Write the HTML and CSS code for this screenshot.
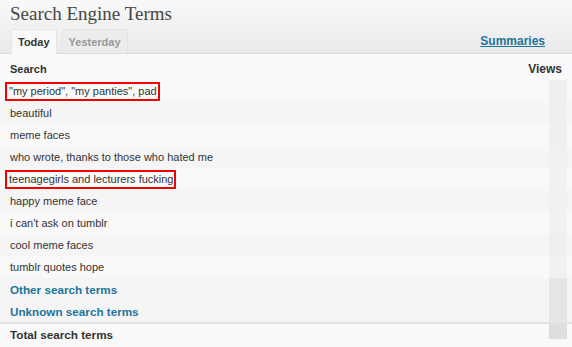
FILE: index.html
```html
<!DOCTYPE html>
<html lang="en">
<head>
<meta charset="UTF-8">
<title>Search Engine Terms</title>
<link rel="stylesheet" href="styles.css">
</head>
<body>
<div class="box">
  <div class="head">
    <h3>Search Engine Terms</h3>
    <div class="tabbar">
      <ul class="tabs">
        <li class="tab active">Today</li>
        <li class="tab">Yesterday</li>
      </ul>
      <a class="summaries" href="#">Summaries</a>
    </div>
  </div>

  <table class="stats">
    <thead>
      <tr><th class="label">Search</th><th class="views">Views</th></tr>
    </thead>
    <tbody>
      <tr><td class="label"><span class="mark">"my period", "my panties", pad</span></td><td class="views"><div class="bar b1"></div></td></tr>
      <tr class="alt"><td class="label">beautiful</td><td class="views"><div class="bar b1"></div></td></tr>
      <tr><td class="label">meme faces</td><td class="views"><div class="bar b1"></div></td></tr>
      <tr class="alt"><td class="label">who wrote, thanks to those who hated me</td><td class="views"><div class="bar b2"></div></td></tr>
      <tr><td class="label"><span class="mark">teenagegirls and lecturers fucking</span></td><td class="views"><div class="bar b2"></div></td></tr>
      <tr class="alt"><td class="label">happy meme face</td><td class="views"><div class="bar b2"></div></td></tr>
      <tr><td class="label">i can't ask on tumblr</td><td class="views"><div class="bar b2"></div></td></tr>
      <tr class="alt"><td class="label">cool meme faces</td><td class="views"><div class="bar b1"></div></td></tr>
      <tr><td class="label">tumblr quotes hope</td><td class="views"><div class="bar b2"></div></td></tr>
      <tr class="alt"><td class="label link">Other search terms</td><td class="views"><div class="bar b3"></div></td></tr>
      <tr class="alt"><td class="label link">Unknown search terms</td><td class="views"><div class="bar b3"></div></td></tr>
      <tr class="total"><td class="label">Total search terms</td><td class="views"><div class="bar b4"></div></td></tr>
    </tbody>
  </table>
</div>
</body>
</html>
```

FILE: styles.css
```css
body {
  margin: 0;
  background: #f9f9f9;
  font-family: "Liberation Sans", Arial, sans-serif;
  font-size: 11px;
  color: #333;
}

.box { width: 572px; height: 347px; overflow: hidden; }

.head {
  background: linear-gradient(to bottom, #f9f9f9, #e9e9e9);
  border-bottom: 1px solid #dcdcdc;
  height: 53px;
}

h3 {
  margin: 0;
  padding: 3px 0 0 10px;
  height: 26px;
  font-family: "Liberation Serif", Georgia, serif;
  font-weight: normal;
  font-size: 19px;
  line-height: 22px;
  color: #464646;
}

.tabbar {
  display: flex;
  align-items: flex-end;
  justify-content: space-between;
  height: 24px;
}

.tabs {
  list-style: none;
  margin: 0;
  padding: 0 0 0 11px;
  display: flex;
  gap: 5px;
}

.tab {
  height: 23px;
  line-height: 25px;
  padding: 0 6px;
  border-radius: 3px 3px 0 0;
  background: #ececec;
  color: #999;
  font-weight: bold;
  font-size: 11px;
  border: 1px solid #e4e4e4;
  border-bottom: none;
}

.tab.active {
  background: #f9f9f9;
  color: #333;
  height: 24px;
  margin-bottom: -1px;
  border-color: #e6e6e6;
}

.summaries {
  color: #21759b;
  font-weight: bold;
  font-size: 12px;
  margin: 0 27px 5px 0;
  text-decoration: underline;
}

.stats {
  width: 100%;
  border-collapse: collapse;
  margin-top: 4px;
}

.stats th {
  height: 20px;
  font-weight: bold;
  color: #333;
  vertical-align: middle;
}

.stats th.label { text-align: left; padding-left: 10px; font-size: 11px; }
.stats th.views { text-align: right; padding: 0 10px 0 0; font-size: 12px; }

.stats td { height: 22px; padding: 0; vertical-align: middle; }
.stats td.label { padding-left: 10px; }
.stats td.views { width: 40px; }

.stats tr.alt { background: #f5f5f5; }

.stats td.link { color: #21759b; font-weight: bold; font-size: 11.7px; }

.stats tr.total td { border-top: 2px solid #e2e2e2; height: 21px; }
.stats tr.total td.label { font-weight: bold; font-size: 11.7px; }

.bar { width: 18px; height: 22px; margin: 0 5px 0 auto; }
.b1 { background: #efefef; }
.b2 { background: #f1f1f1; }
.b3 { background: #e5e5e5; }
.b4 { background: #dedede; height: 15px; margin-bottom: 6px; }

.mark {
  margin-left: -5px;
  padding: 1px 1px 2px 2px;
  border: 2px solid #f30000;
}
```
